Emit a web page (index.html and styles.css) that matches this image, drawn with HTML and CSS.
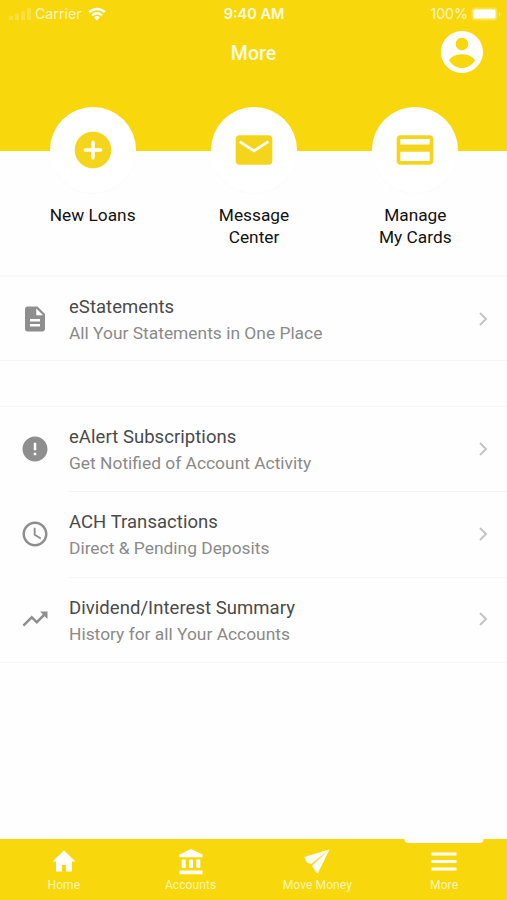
FILE: index.html
```html
<!DOCTYPE html>
<html lang="en">
<head>
    <meta charset="utf-8">
    <title>More</title>
    <link rel="stylesheet" href="styles.css">
</head>
<body>
    <div class="app">
        <header class="header">
            <div class="status">
                <div class="status-left">
                    <svg class="signal" width="22" height="12" viewBox="0 0 22 12">
                        <rect x="0" y="8" width="4" height="4" rx="1"/>
                        <rect x="6" y="5.5" width="4" height="6.5" rx="1"/>
                        <rect x="12" y="3" width="4" height="9" rx="1"/>
                        <rect x="18" y="0" width="4" height="12" rx="1"/>
                    </svg>
                    <span class="carrier">Carrier</span>
                    <svg class="wifi" width="18" height="14" viewBox="0 0 18 14">
                        <path d="M1.2 5.1a11.2 11.2 0 0 1 15.6 0M4.1 8.3a7 7 0 0 1 9.8 0" fill="none" stroke="#fff" stroke-width="2.5"/>
                        <path d="M9 13.6 6.1 10.5a4.2 4.2 0 0 1 5.8 0z" fill="#fff"/>
                    </svg>
                </div>
                <span class="time">9:40 AM</span>
                <div class="status-right">
                    <span class="percent">100%</span>
                    <svg class="battery" width="30" height="14" viewBox="0 0 30 14">
                        <rect x=".5" y=".5" width="26" height="13" rx="3.5" fill="#fff" fill-opacity=".25"/>
                        <rect x="2.5" y="2.5" width="22" height="9" rx="1.5" fill="#fff"/>
                        <path d="M28 5v4.5q1.5-.8 1.5-2.2T28 5z" fill="#fff" fill-opacity=".4"/>
                    </svg>
                </div>
            </div>
            <div class="titlebar">
                <h1>More</h1>
                <svg class="profile" viewBox="2 2 20 20">
                    <path d="M12 2C6.48 2 2 6.48 2 12s4.48 10 10 10 10-4.48 10-10S17.52 2 12 2zm0 3.200c1.66 0 3 1.34 3 3s-1.34 3-3 3-3-1.34-3-3 1.34-3 3-3zm0 14.400c-2.600 0-4.800-1.500-6.200-3.600.8-1.900 4-2.900 6.200-2.900s5.400 1 6.200 2.900c-1.400 2.100-3.600 3.600-6.200 3.600z"/>
                </svg>
            </div>
        </header>

        <section class="shortcuts">
            <a class="shortcut">
                <span class="circle">
                    <svg viewBox="0 0 24 24">
                        <circle cx="12" cy="12" r="10"/>
                        <path d="M12 7.8v8.4M7.8 12h8.4" stroke="#fff" stroke-width="1.9" stroke-linecap="round"/>
                    </svg>
                </span>
                New Loans
            </a>
            <a class="shortcut">
                <span class="circle">
                    <svg viewBox="0 0 24 24"><path d="M20 4H4c-1.1 0-1.99.9-1.99 2L2 18c0 1.1.9 2 2 2h16c1.1 0 2-.9 2-2V6c0-1.1-.9-2-2-2z"/><path d="M4.200 7.400 12 12.500l7.800-5.100" fill="none" stroke="#fff" stroke-width="1.500"/></svg>
                </span>
                Message<br>Center
            </a>
            <a class="shortcut">
                <span class="circle">
                    <svg viewBox="0 0 24 24"><path d="M20 4H4c-1.11 0-1.99.89-1.99 2L2 18c0 1.11.89 2 2 2h16c1.11 0 2-.89 2-2V6c0-1.11-.89-2-2-2zm0 14H4v-5h16v5zm0-9H4V6h16v3z"/></svg>
                </span>
                Manage<br>My Cards
            </a>
        </section>

        <main>
            <div class="group first">
                <a class="row">
                    <svg class="icon" viewBox="0 0 24 24"><path d="M14 2H6c-1.1 0-1.99.9-1.99 2L4 20c0 1.1.89 2 1.99 2H18c1.1 0 2-.9 2-2V8l-6-6zm2 16H8v-2h8v2zm0-4H8v-2h8v2zm-3-5V3.5L18.5 9H13z"/></svg>
                    <div class="text">
                        <div class="name">eStatements</div>
                        <div class="desc">All Your Statements in One Place</div>
                    </div>
                    <svg class="chevron" viewBox="0 0 9 14"><path d="M1 1l6 6-6 6"/></svg>
                </a>
            </div>
            <div class="group">
                <a class="row">
                    <svg class="icon" viewBox="0 0 24 24"><path d="M12 2C6.48 2 2 6.48 2 12s4.48 10 10 10 10-4.48 10-10S17.52 2 12 2zm1 15h-2v-2h2v2zm0-4h-2V7h2v6z"/></svg>
                    <div class="text">
                        <div class="name">eAlert Subscriptions</div>
                        <div class="desc">Get Notified of Account Activity</div>
                    </div>
                    <svg class="chevron" viewBox="0 0 9 14"><path d="M1 1l6 6-6 6"/></svg>
                </a>
                <a class="row">
                    <svg class="icon" viewBox="0 0 24 24"><path d="M11.99 2C6.47 2 2 6.48 2 12s4.47 10 9.99 10C17.52 22 22 17.52 22 12S17.52 2 11.99 2zM12 20c-4.42 0-8-3.58-8-8s3.58-8 8-8 8 3.58 8 8-3.58 8-8 8zm.5-13H11v6l5.25 3.15.75-1.23-4.5-2.67z"/></svg>
                    <div class="text">
                        <div class="name">ACH Transactions</div>
                        <div class="desc">Direct &amp; Pending Deposits</div>
                    </div>
                    <svg class="chevron" viewBox="0 0 9 14"><path d="M1 1l6 6-6 6"/></svg>
                </a>
                <a class="row">
                    <svg class="icon" viewBox="0 0 24 24"><path d="M16 6l2.29 2.29-4.88 4.88-4-4L2 16.59 3.41 18l6-6 4 4 6.3-6.29L22 12V6z"/></svg>
                    <div class="text">
                        <div class="name">Dividend/Interest Summary</div>
                        <div class="desc">History for all Your Accounts</div>
                    </div>
                    <svg class="chevron" viewBox="0 0 9 14"><path d="M1 1l6 6-6 6"/></svg>
                </a>
            </div>
        </main>

        <nav class="tabs">
            <a class="tab">
                <svg viewBox="0 0 28 28"><path d="M14 2.5 2.5 13.5H6V23.500h6v-6.500h4v6.500h6V13.500h3.500z"/></svg>
                <span>Home</span>
            </a>
            <a class="tab">
                <svg viewBox="0 0 28 28"><path d="M14 1 2.500 6.500v2.700h23V6.500zM2.500 22.500h23v3.800h-23z"/><rect x="4.700" y="11.500" width="4" height="8.500" rx="1"/><rect x="12" y="11.500" width="4" height="8.500" rx="1"/><rect x="19.300" y="11.500" width="4" height="8.500" rx="1"/></svg>
                <span>Accounts</span>
            </a>
            <a class="tab">
                <svg viewBox="0 0 28 28"><path d="M26.500 1.500 2 8.700q-.8.400-.4 1.300l2.400 4.500q.4.700 1.200.8l3.300.5zM26.500 1.500 9.500 17.200q-.7.800-.1 1.600l4.200 6q.9 1 1.600-.2z"/></svg>
                <span>Move Money</span>
            </a>
            <a class="tab active">
                <svg viewBox="0 0 28 28"><path d="M1.500 4.500h25v3h-25zM1.500 12h25v3h-25zM1.500 19.500h25v3h-25z"/></svg>
                <span>More</span>
            </a>
        </nav>
    </div>
</body>
</html>
```
FILE: styles.css
```css
* {
    box-sizing: border-box;
}

body {
    margin: 0;
    font-family: Roboto, sans-serif;
    background-color: #fefefe;
}

.app {
    display: flex;
    flex-direction: column;
    height: 900px;
    overflow: hidden;
}

svg {
    display: block;
}

.header {
    height: 151px;
    flex-shrink: 0;
    background-color: #f8d80c;
    color: #fffbe0;
}

.status {
    display: grid;
    grid-template-columns: 1fr auto 1fr;
    align-items: center;
    height: 27px;
    padding: 0 6px 0 9px;
    font-family: Inter, sans-serif;
    font-size: 14.2px;
}

.status-left, .status-right {
    display: flex;
    align-items: center;
}

.status-right {
    justify-content: flex-end;
    gap: 3px;
}

.signal {
    fill: #fff;
    opacity: 0.22;
}

.carrier {
    margin: 0 6px 0 4px;
    opacity: 0.85;
}

.time {
    font-size: 14.5px;
    font-weight: 600;
    margin-left: -2px;
}

.percent {
    opacity: 0.85;
}

.titlebar {
    display: grid;
    grid-template-columns: 1fr auto 1fr;
    align-items: center;
    height: 50px;
    padding: 0 24px;
}

.titlebar h1 {
    grid-column: 2;
    margin: 0;
    padding-top: 2px;
    font-size: 19.5px;
    font-weight: 500;
}

.profile {
    justify-self: end;
    width: 42px;
    height: 42px;
    fill: #fff;
}

.shortcuts {
    display: grid;
    grid-template-columns: repeat(3, 1fr);
    height: 168px;
    flex-shrink: 0;
    margin-top: -44px;
    padding: 0 11px 0 12px;
}

.shortcut {
    font-size: 17.3px;
    line-height: 22.5px;
    text-align: center;
    color: #111;
}

.circle {
    display: flex;
    align-items: center;
    justify-content: center;
    width: 86px;
    height: 86px;
    margin: 0 auto 10.5px;
    border-radius: 50%;
    background-color: #fff;
    box-shadow: 0 1px 2px rgba(0, 0, 0, 0.02);
}

.circle svg {
    width: 44px;
    height: 44px;
    fill: #f5d51c;
}

.group {
    border-top: 1px solid #f5f5f5;
    border-bottom: 1px solid #f5f5f5;
    margin-bottom: 45px;
}

.group.first {
    border-top: 2px solid #f8f8f8;
}

.row {
    display: flex;
    align-items: center;
    height: 84px;
    padding: 0 19px 0 20px;
}

.group.first .row {
    height: 83px;
}

.group .row + .row {
    height: 85.5px;
}

.icon {
    width: 30px;
    height: 30px;
    margin-right: 19px;
    fill: #8e8e8e;
}

.text {
    display: flex;
    flex: 1;
    flex-direction: column;
    justify-content: center;
    height: 100%;
    padding-top: 2px;
}

.row + .row .text {
    border-top: 1px solid #f5f5f5;
    margin-right: -28px;
    padding-right: 28px;
}

.name {
    font-size: 18.5px;
    line-height: 26px;
    letter-spacing: 0.05px;
    color: #4a4a4a;
}

.desc {
    font-size: 17.4px;
    line-height: 26px;
    color: #8a8a8a;
}

.chevron {
    width: 9px;
    height: 14px;
    fill: none;
    stroke: #c4c4c4;
    stroke-width: 2;
}

.tabs {
    display: grid;
    grid-template-columns: repeat(4, 1fr);
    height: 61px;
    flex-shrink: 0;
    margin-top: auto;
    background-color: #f8d80c;
}

.tab {
    position: relative;
    padding: 9px 0 0 1px;
    font-size: 12px;
    line-height: 18px;
    letter-spacing: 0.1px;
    text-align: center;
    color: #fff6b8;
}

.tab svg {
    width: 28px;
    height: 28px;
    margin: 0 auto;
    fill: #fff;
}

.tab.active::before {
    content: "";
    position: absolute;
    top: 0;
    left: 50%;
    width: 79px;
    height: 4px;
    transform: translateX(-50%);
    border-radius: 0 0 4px 4px;
    background-color: #fefefe;
}
```
